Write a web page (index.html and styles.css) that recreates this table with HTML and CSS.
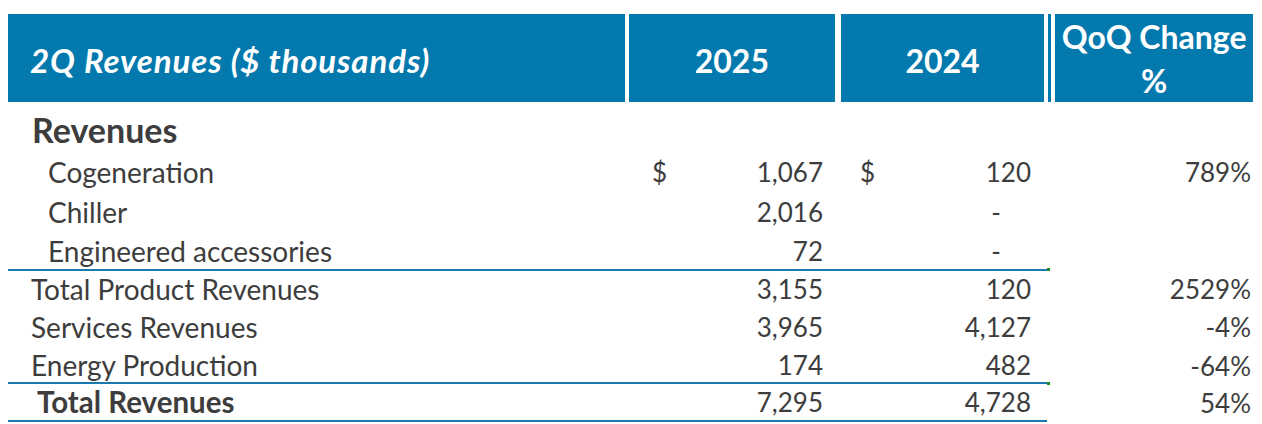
FILE: index.html
```html
<!DOCTYPE html>
<html>
<head>
<meta charset="utf-8">
<link rel="stylesheet" href="styles.css">
</head>
<body>
<div class="sheet">
  <div class="head">
    <div class="h h-title">2Q Revenues ($ thousands)</div>
    <div class="h h-y25">2025</div>
    <div class="h h-y24">2024</div>
    <div class="h-sep"></div>
    <div class="h h-pct">QoQ Change<br>%</div>
  </div>

  <div class="row r-section">
    <div class="cell label bold sec">Revenues</div>
    <div class="cell num"></div>
    <div class="cell num"></div>
    <div class="cell sp"></div>
    <div class="cell pct"></div>
  </div>
  <div class="row r-tall">
    <div class="cell label sub">Cogeneration</div>
    <div class="cell num c2"><span class="cur">$</span><span>1,067</span></div>
    <div class="cell num c3"><span class="cur">$</span><span>120</span></div>
    <div class="cell sp"></div>
    <div class="cell pct">789%</div>
  </div>
  <div class="row r-tall">
    <div class="cell label sub">Chiller</div>
    <div class="cell num c2"><span></span><span>2,016</span></div>
    <div class="cell num c3"><span></span><span class="dash">-</span></div>
    <div class="cell sp"></div>
    <div class="cell pct"></div>
  </div>
  <div class="row r-last rule">
    <div class="cell label sub">Engineered accessories</div>
    <div class="cell num c2"><span></span><span>72</span></div>
    <div class="cell num c3"><span></span><span class="dash">-</span></div>
    <div class="cell sp"><i class="flag"></i></div>
    <div class="cell pct"></div>
  </div>
  <div class="row r-mid">
    <div class="cell label tot">Total Product Revenues</div>
    <div class="cell num c2"><span></span><span>3,155</span></div>
    <div class="cell num c3"><span></span><span>120</span></div>
    <div class="cell sp"></div>
    <div class="cell pct">2529%</div>
  </div>
  <div class="row r-mid">
    <div class="cell label tot">Services Revenues</div>
    <div class="cell num c2"><span></span><span>3,965</span></div>
    <div class="cell num c3"><span></span><span>4,127</span></div>
    <div class="cell sp"></div>
    <div class="cell pct">-4%</div>
  </div>
  <div class="row r-mid2 rule">
    <div class="cell label tot">Energy Production</div>
    <div class="cell num c2"><span></span><span>174</span></div>
    <div class="cell num c3"><span></span><span>482</span></div>
    <div class="cell sp"><i class="flag"></i></div>
    <div class="cell pct">-64%</div>
  </div>
  <div class="row r-final rule">
    <div class="cell label bold grand">Total Revenues</div>
    <div class="cell num c2"><span></span><span>7,295</span></div>
    <div class="cell num c3"><span></span><span>4,728</span></div>
    <div class="cell sp"></div>
    <div class="cell pct">54%</div>
  </div>
</div>
</body>
</html>
```

FILE: styles.css
```css
html, body {
  margin: 0;
  padding: 0;
  background: #ffffff;
}

.sheet {
  padding: 14px 0 0 8px;
  width: 1245px;
  font-family: "Lato", "Open Sans", sans-serif;
  color: #3d3d3d;
}

.head {
  display: flex;
  height: 88px;
}

.h {
  background: #0479ad;
  color: #ffffff;
  font-weight: 700;
  font-size: 32px;
  display: flex;
  align-items: center;
  justify-content: center;
  text-align: center;
}

.h-title {
  width: 618px;
  justify-content: flex-start;
  padding-left: 22px;
  box-sizing: border-box;
  font-style: italic;
  font-size: 33px;
  letter-spacing: 0.9px;
  padding-top: 4px;
}

.h-y25 {
  width: 206px;
  margin-left: 4px;
  padding-top: 4px;
  box-sizing: border-box;
}

.h-y24 {
  width: 204px;
  margin-left: 6px;
  padding-top: 4px;
  box-sizing: border-box;
}

.h-sep {
  width: 3px;
  margin-left: 4px;
  background: #0479ad;
}

.h-pct {
  width: 198px;
  margin-left: 4px;
  line-height: 44px;
  padding-top: 2px;
  box-sizing: border-box;
}

.row {
  display: grid;
  grid-template-columns: 622px 210px 207px 8px 198px;
  font-size: 26px;
  line-height: 30px;
  align-items: stretch;
}

.cell {
  display: flex;
  align-items: center;
  white-space: nowrap;
  padding-bottom: 3px;
  box-sizing: border-box;
  min-height: 0;
}

.rule > .cell { padding-bottom: 0; }

.label { font-size: 28px; }

.r-section { height: 51px; grid-template-rows: 51px; }
.r-tall { height: 40px; grid-template-rows: 40px; }
.r-last { height: 38px; grid-template-rows: 38px; }
.r-mid { height: 38px; grid-template-rows: 38px; }
.r-mid2 { height: 37px; grid-template-rows: 37px; }
.r-final { height: 38px; grid-template-rows: 38px; }

.rule > .cell:nth-child(-n+3) {
  border-bottom: 2px solid #1a7ab0;
}

.bold { font-weight: 700; }

.sec { padding-left: 24px; font-size: 34px; line-height: 40px; padding-top: 4px; padding-bottom: 0; }
.sub { padding-left: 40px; }
.tot { padding-left: 23px; }
.grand { padding-left: 29px; font-size: 29.5px; }

.num {
  justify-content: space-between;
}

.c2 { padding-left: 22px; padding-right: 17px; }
.c3 { padding-left: 20px; padding-right: 16px; }

.dash { padding-right: 30px; }

.pct {
  justify-content: flex-end;
  padding-right: 2px;
}

.sp {
  align-items: flex-start;
  padding-bottom: 0;
}

.flag {
  display: block;
  width: 3px;
  height: 3px;
  background: #1a8a1a;
}

.r-last .flag { margin-top: 35px; }
.r-mid2 .flag { margin-top: 35px; }
```
